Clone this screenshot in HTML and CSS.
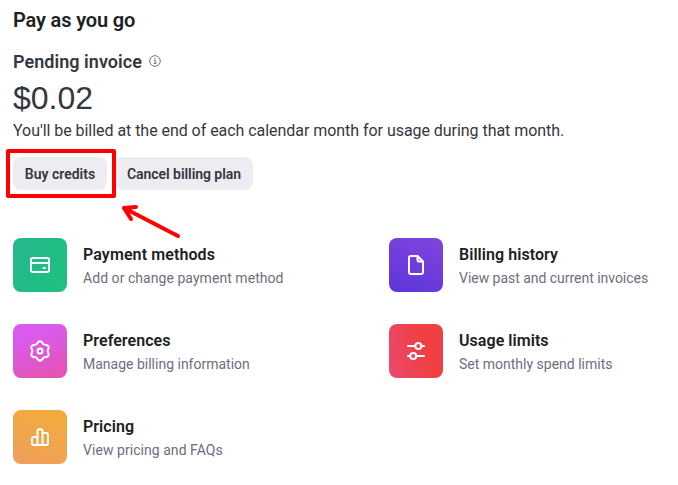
FILE: index.html
```
<!DOCTYPE html>
<html lang="en">
<head>
<meta charset="utf-8">
<title>Billing</title>
<link rel="stylesheet" href="styles.css">
</head>
<body>
<main class="billing">
  <h1 class="plan">Pay as you go</h1>
  <h2 class="pending">Pending invoice
    <svg class="info" viewBox="0 0 12 12" width="12" height="12" fill="none" stroke="currentColor"><circle cx="6" cy="6" r="5.3"/><path d="M5 5.3h1.200v3.200M4.800 8.500h2.600"/><path d="M6 3v1.100" stroke-width="1.2"/></svg>
  </h2>
  <div class="amount">$0.02</div>
  <p class="note">You'll be billed at the end of each calendar month for usage during that month.</p>
  <div class="actions">
    <button class="btn buy">Buy credits</button>
    <button class="btn cancel">Cancel billing plan</button>
    <svg class="callout" viewBox="0 0 190 94" width="190" height="94" fill="none" stroke="#fe0000" stroke-width="4" stroke-linejoin="round" stroke-linecap="round"><rect x="8" y="6" width="106" height="45"/><path d="M178 91L124 63M136 62l-12 1 7 11"/></svg>
  </div>
  <div class="links">
    <a class="item">
      <span class="tile green"><svg viewBox="0 0 24 24" width="24" height="24"><rect x="3" y="5" width="18" height="14" rx="2"/><path d="M3 10h18M15.500 15h1.500"/></svg></span>
      <span class="text"><strong class="t-pay">Payment methods</strong><small class="s-pay">Add or change payment method</small></span>
    </a>
    <a class="item">
      <span class="tile purple"><svg viewBox="0 0 24 24" width="24" height="24"><path d="M13.500 3H6.800A1.800 1.800 0 0 0 5 4.800V19.200A1.800 1.800 0 0 0 6.800 21H17.200A1.800 1.800 0 0 0 19 19.200V8.500zM13.500 3v3.700a1.800 1.800 0 0 0 1.800 1.800H19"/></svg></span>
      <span class="text"><strong>Billing history</strong><small class="s-hist">View past and current invoices</small></span>
    </a>
    <a class="item">
      <span class="tile pink"><svg viewBox="0 0 24 24" width="24" height="24"><path d="M9.770 3.690A2.500 2.500 0 0 1 14.230 3.690A4 4 0 0 0 18.080 5.920A2.500 2.500 0 0 1 20.310 9.770A4 4 0 0 0 20.310 14.230A2.500 2.500 0 0 1 18.080 18.080A4 4 0 0 0 14.230 20.310A2.500 2.500 0 0 1 9.770 20.310A4 4 0 0 0 5.920 18.080A2.500 2.500 0 0 1 3.690 14.230A4 4 0 0 0 3.690 9.770A2.500 2.500 0 0 1 5.920 5.920A4 4 0 0 0 9.770 3.690z"/><circle cx="12" cy="12" r="2.500"/></svg></span>
      <span class="text"><strong>Preferences</strong><small>Manage billing information</small></span>
    </a>
    <a class="item">
      <span class="tile red"><svg viewBox="0 0 24 24" width="24" height="24"><path d="M4 7h7M17 7h3M4 17h2M12 17h8"/><circle cx="14.300" cy="7" r="3"/><circle cx="9.200" cy="17" r="3"/></svg></span>
      <span class="text"><strong>Usage limits</strong><small>Set monthly spend limits</small></span>
    </a>
    <a class="item">
      <span class="tile orange"><svg viewBox="0 0 24 24" width="24" height="24"><path d="M9.500 20V6.500a2.500 2.500 0 0 1 5 0V20M9.500 12H6a2 2 0 0 0-2 2v4a2 2 0 0 0 2 2h12a2 2 0 0 0 2-2v-8a2 2 0 0 0-2-2h-3.500"/></svg></span>
      <span class="text"><strong>Pricing</strong><small class="s-price">View pricing and FAQs</small></span>
    </a>
  </div>
</main>
</body>
</html>
```

FILE: styles.css
```
* { box-sizing: border-box; }
body {
  margin: 0;
  background: #fff;
  color: #353740;
  font-family: Roboto, "Liberation Sans", sans-serif;
}
h1, h2, p { margin: 0; }
.billing { padding: 8px 13px 0; }
.plan {
  font-size: 20px;
  line-height: 24px;
  font-weight: 600;
  letter-spacing: -0.15px;
  color: #202123;
}
.pending {
  display: flex;
  align-items: center;
  gap: 7px;
  margin-top: 18px;
  font-size: 18px;
  line-height: 24px;
  font-weight: 600;
  letter-spacing: 0.04px;
}
.info { color: #6e6e80; margin-top: -2px; }
.amount {
  margin-top: 4px;
  font-family: "Liberation Sans", sans-serif;
  font-size: 32px;
  line-height: 40px;
}
.note {
  margin-top: 1px;
  font-size: 16px;
  line-height: 24px;
  letter-spacing: -0.045px;
}
.actions {
  position: relative;
  display: flex;
  gap: 8px;
  margin-top: 14px;
}
.btn {
  height: 33px;
  padding: 0;
  border: 0;
  border-radius: 8px;
  background: #ececf1;
  color: #353740;
  font: 600 14px/20px Roboto, sans-serif;
}
.buy { width: 94px; }
.cancel { width: 138px; letter-spacing: -0.05px; }
.callout {
  position: absolute;
  left: -13px;
  top: -12px;
}
.links {
  display: grid;
  grid-template-columns: 376px 1fr;
  row-gap: 32px;
  margin-top: 48px;
}
.item { display: flex; gap: 16px; height: 54px; }
.tile {
  display: grid;
  place-items: center;
  width: 54px;
  height: 54px;
  border-radius: 8px;
}
.tile svg {
  fill: none;
  stroke: #fff;
  stroke-width: 2;
  stroke-linecap: round;
  stroke-linejoin: round;
}
.green { background: linear-gradient(120deg, #27b591, #1bc37c); }
.purple { background: linear-gradient(200deg, #8244dc, #5b36da); }
.pink { background: linear-gradient(160deg, #d95bed 25%, #e653ad); }
.red { background: linear-gradient(75deg, #ea4970, #f04044 60%); }
.orange { background: linear-gradient(205deg, #f3ad38, #ef9e5c); }
.text { white-space: nowrap; }
.text strong, .text small { display: block; line-height: 24px; }
.text strong {
  margin-top: 5px;
  font-size: 16px;
  font-weight: 600;
  letter-spacing: 0.05px;
  color: #202123;
}
.text .t-pay { letter-spacing: 0.1px; }
.text small { margin-top: -1px; font-size: 14px; color: #6e6e80; }
.text .s-pay, .text .s-price { letter-spacing: 0.05px; }
.text .s-hist { letter-spacing: -0.03px; }
```
